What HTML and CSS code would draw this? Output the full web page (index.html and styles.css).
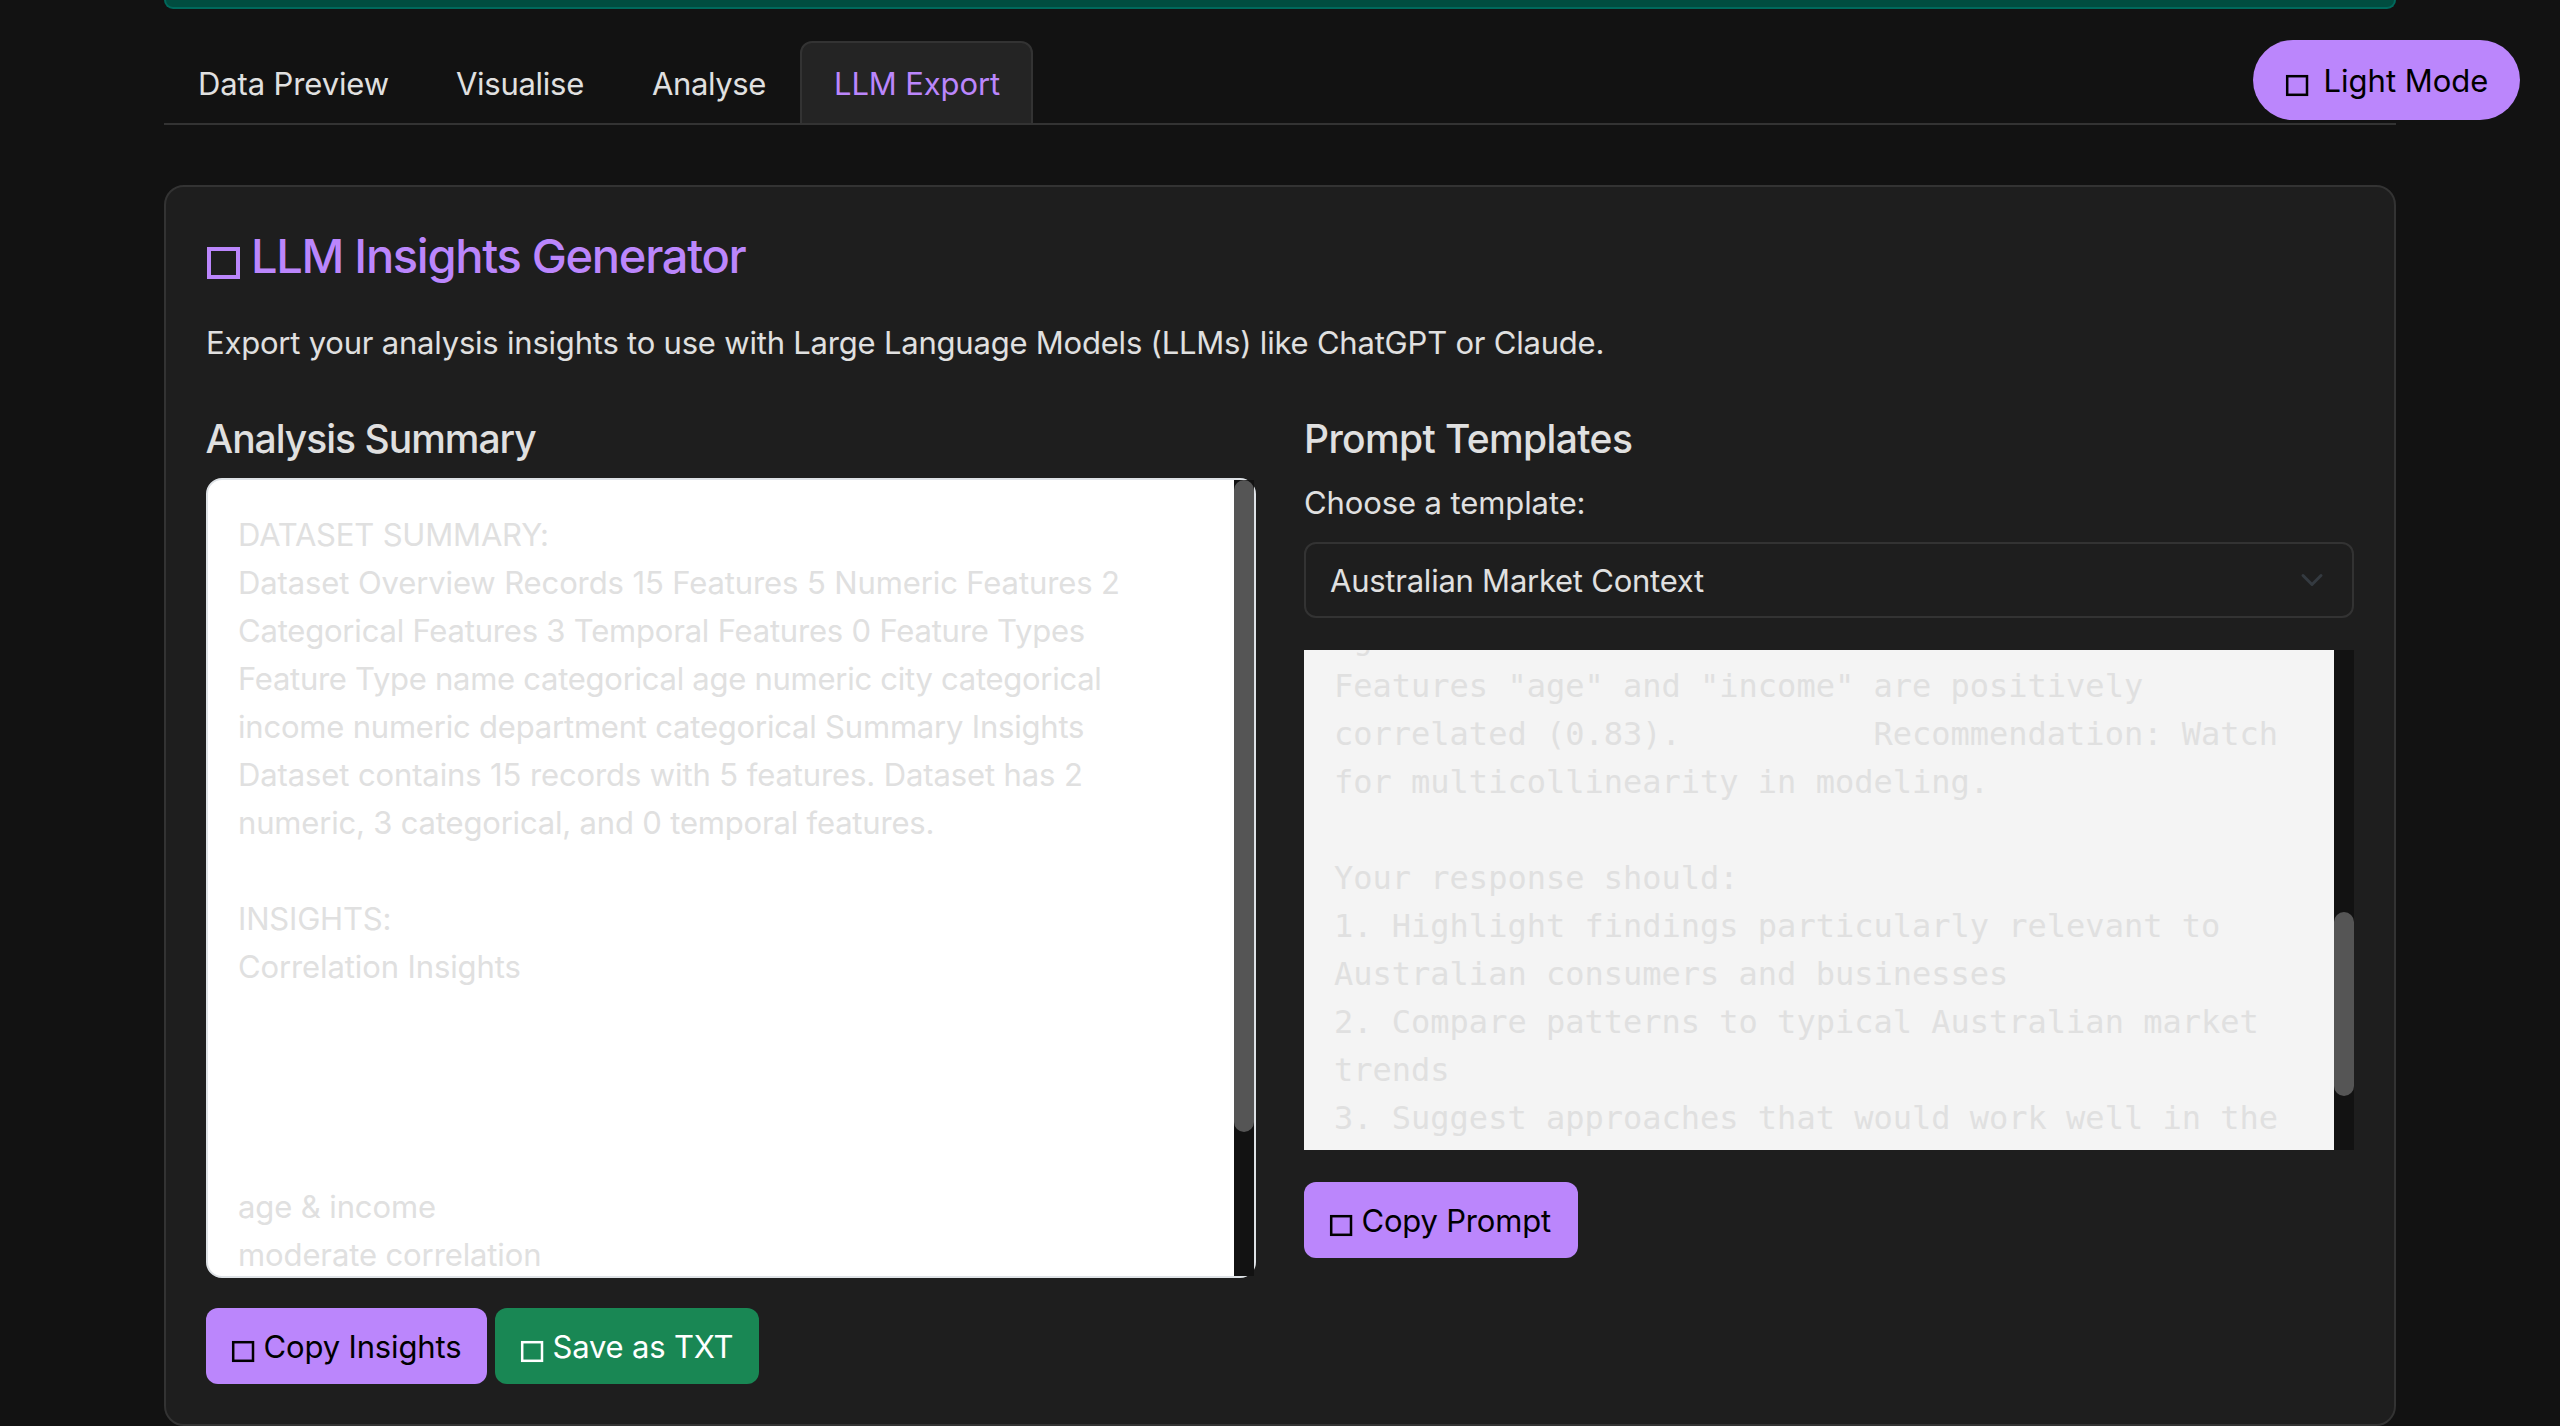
FILE: index.html
```
<!DOCTYPE html>
<html lang="en">
<head>
<meta charset="utf-8">
<title>LLM Insights Generator</title>
<link rel="stylesheet" href="styles.css">
</head>
<body>
<button class="theme-toggle" type="button"><svg class="glyph" viewBox="0 0 22 21"><rect x="1.2" y="1.2" width="19.8" height="18.6"/></svg><span>Light Mode</span></button>
<div class="container">
  <div class="alert"></div>
  <nav class="tabs">
    <a class="tab tab-preview">Data Preview</a>
    <a class="tab tab-visualise">Visualise</a>
    <a class="tab tab-analyse">Analyse</a>
    <a class="tab tab-export active">LLM Export</a>
  </nav>
  <main class="card">
    <h2 class="title"><i class="glyph-lg"></i><span>LLM Insights Generator</span></h2>
    <p class="lead">Export your analysis insights to use with Large Language Models (LLMs) like ChatGPT or Claude.</p>
    <div class="row">
      <section class="col">
        <h4 class="subtitle subtitle-summary">Analysis Summary</h4>
        <div class="summary">
          <div class="summary-text">
            <div class="ls-2">DATASET SUMMARY:</div>
            <div class="ls-1">Dataset Overview Records 15 Features 5 Numeric Features 2</div>
            <div class="ls-3">Categorical Features 3 Temporal Features 0 Feature Types</div>
            <div class="ls-4">Feature Type name categorical age numeric city categorical</div>
            <div class="ls-3">income numeric department categorical Summary Insights</div>
            <div class="ls-1">Dataset contains 15 records with 5 features. Dataset has 2</div>
            <div class="ls-2">numeric, 3 categorical, and 0 temporal features.</div>
            <br>
            <div class="ls-2">INSIGHTS:</div>
            <div class="ls-1">Correlation Insights</div>
            <br><br><br><br>
            <div class="ls-1">age &amp; income</div>
            <div class="ls-1">moderate correlation</div>
          </div>
          <div class="track"><div class="thumb thumb-summary"></div></div>
        </div>
        <div class="actions">
          <button class="btn btn-insights" type="button"><svg class="glyph" viewBox="0 0 22 21"><rect x="1.2" y="1.2" width="19.8" height="18.6"/></svg><span>Copy Insights</span></button>
          <button class="btn btn-save" type="button"><svg class="glyph" viewBox="0 0 22 21"><rect x="1.2" y="1.2" width="19.8" height="18.6"/></svg><span>Save as TXT</span></button>
        </div>
      </section>
      <section class="col">
        <h4 class="subtitle subtitle-prompt">Prompt Templates</h4>
        <div class="label">Choose a template:</div>
        <div class="select">
          <span>Australian Market Context</span>
          <svg class="chevron" viewBox="0 0 16 16"><path d="m2 5 6 6 6-6" fill="none" stroke="#343a40" stroke-width="2" stroke-linecap="round" stroke-linejoin="round"/></svg>
        </div>
        <div class="prompt">
<pre class="prompt-text">age &amp; income
Features "age" and "income" are positively
correlated (0.83).          Recommendation: Watch
for multicollinearity in modeling.

Your response should:
1. Highlight findings particularly relevant to
Australian consumers and businesses
2. Compare patterns to typical Australian market
trends
3. Suggest approaches that would work well in the</pre>
          <div class="track"><div class="thumb thumb-prompt"></div></div>
        </div>
        <button class="btn btn-prompt" type="button"><svg class="glyph" viewBox="0 0 22 21"><rect x="1.2" y="1.2" width="19.8" height="18.6"/></svg><span>Copy Prompt</span></button>
      </section>
    </div>
  </main>
</div>
</body>
</html>
```
FILE: styles.css
```
* { box-sizing: border-box; }
html, body { height: 100%; }
body {
  margin: 0;
  background: #121212;
  color: #e0e0e0;
  font: 400 31px/48px Inter, "Liberation Sans", sans-serif;
  overflow: hidden;
  white-space: nowrap;
}
button { font: inherit; border: 0; margin: 0; text-align: left; }

.container { width: 2232px; margin: 0 auto; }

.alert {
  height: 9px;
  background: #004d40;
  border: 2px solid #00695c;
  border-top: 0;
  border-radius: 0 0 12px 12px;
  margin-bottom: 32px;
}

/* Square placeholder glyphs in front of the labels */
.glyph {
  flex: none;
  width: 22px;
  height: 21px;
  margin-top: 18px;
  overflow: visible;
  fill: none;
  stroke: currentColor;
  stroke-width: 2.5;
}
.glyph-lg {
  flex: none;
  width: 33px;
  height: 32px;
  border: 4px solid currentColor;
  margin: 20px 11px 0 1px;
}

.theme-toggle {
  position: absolute;
  top: 40px;
  right: 40px;
  width: 267px;
  height: 80px;
  border-radius: 40px;
  background: #bb86fc;
  color: #000;
  display: flex;
  align-items: flex-start;
  gap: 16px;
  padding: 17px 0 0 32.5px;
}

.tabs {
  display: flex;
  height: 84px;
  border-bottom: 2px solid #333;
  margin-bottom: 60px;
}
.tab {
  height: 84px;
  padding: 17px 0 0 32px;
  border: 2px solid transparent;
  border-radius: 12px 12px 0 0;
  letter-spacing: -0.12px;
}
.tab-preview { width: 258px; }
.tab-visualise { width: 196px; letter-spacing: -0.28px; }
.tab-analyse { width: 182px; letter-spacing: -0.4px; }
.tab-export { width: 233px; }
.tab.active {
  background: #242424;
  color: #bb86fc;
  border-color: #333;
}

.card {
  height: 1241px;
  background: #1e1e1e;
  border: 2px solid #333;
  border-radius: 20px;
  padding: 40px;
}
.title {
  display: flex;
  margin: 0 0 34px;
  font: 500 47px/58px Inter, "Liberation Sans", sans-serif;
  letter-spacing: -1.3px;
  color: #bb86fc;
}
.lead { margin: 0 0 48px; letter-spacing: -0.21px; }

.row { display: flex; gap: 48px; }
.col { width: 1050px; }
.subtitle { margin: 0 0 15px; font-size: 39px; font-weight: 500; }
.subtitle-summary { letter-spacing: -1px; margin-left: -0.5px; }
.subtitle-prompt { letter-spacing: -0.62px; }

.summary {
  display: flex;
  justify-content: space-between;
  height: 800px;
  background: #fff;
  border: 2px solid #dee2e6;
  border-radius: 16px;
}
.summary-text { padding: 31px 0 0 30px; }
.ls-1 { letter-spacing: -0.11px; }
.ls-2 { letter-spacing: -0.18px; }
.ls-3 { letter-spacing: -0.2px; }
.ls-4 { letter-spacing: -0.27px; }

.track { width: 20px; height: 100%; background: #121212; }
.thumb { border-radius: 10px; background: #555; }
.thumb-summary { height: 652px; }
.thumb-prompt { height: 184px; margin-top: 262px; }

.actions { display: flex; gap: 8px; margin-top: 30px; }
.btn {
  display: flex;
  align-items: flex-start;
  gap: 9.5px;
  height: 76px;
  padding: 15px 0 0 26px;
  border-radius: 12px;
  background: #bb86fc;
  color: #000;
}
.btn-insights { width: 281px; letter-spacing: -0.15px; }
.btn-save { width: 264px; background: #198754; color: #fff; letter-spacing: -0.19px; }
.btn-prompt { width: 274px; letter-spacing: -0.2px; }

.label { padding-top: 1px; margin-bottom: 15px; letter-spacing: -0.1px; }
.select {
  display: flex;
  justify-content: space-between;
  height: 76px;
  padding: 13px 28px 0 24px;
  border: 2px solid #333;
  border-radius: 12px;
  letter-spacing: -0.24px;
  margin-bottom: 32px;
}
.chevron { width: 24px; height: 24px; margin-top: 11px; }

.prompt {
  display: flex;
  justify-content: space-between;
  height: 500px;
  overflow: hidden;
  background: #f4f4f4;
  margin-bottom: 32px;
}
.prompt-text {
  margin: -36px 0 0 30px;
  font: 32px/48px "DejaVu Sans Mono", monospace;
}
```
